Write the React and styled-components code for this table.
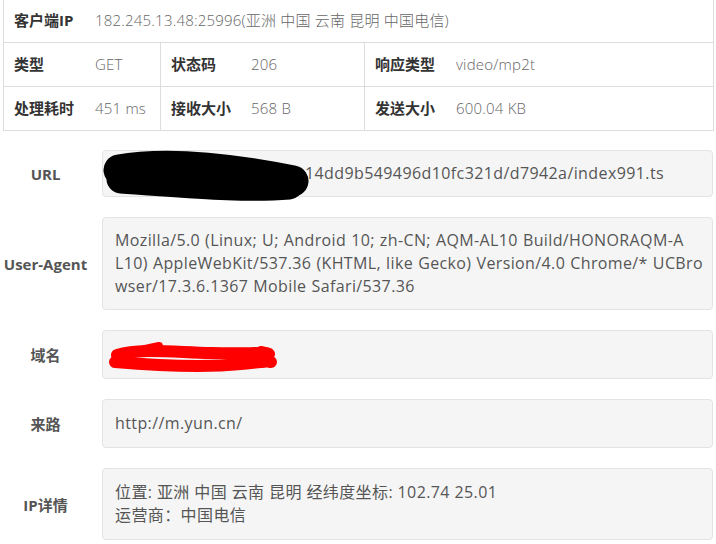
import React from 'react'
import styled, { createGlobalStyle } from 'styled-components'

const GlobalStyle = createGlobalStyle`
    body {
        margin: 0;
        background: #fff;
        font-family: "Open Sans", "Noto Sans CJK SC", sans-serif;
        color: #333;
    }
`

const Page = styled.div`
    width: 716px;
    padding: 0 3px;
    box-sizing: border-box;
`

const InfoTable = styled.table`
    width: 710px;
    margin-top: -2px;
    border-collapse: collapse;
    table-layout: fixed;
    font-size: 15px;
`

const Cell = styled.td`
    border: 1px solid #ddd;
    padding: 11px 10px;
    line-height: 21px;
    white-space: nowrap;
`

const Label = styled.span`
    display: inline-block;
    width: ${p => p.w || 80}px;
    font-weight: 700;
    color: #333;
`

const Value = styled.span`
    color: #666;
    font-weight: 300;
    letter-spacing: 0.2px;
`

const Details = styled.div`
    margin-top: 19px;
    display: flex;
    flex-direction: column;
    gap: 20px;
`

const Row = styled.div`
    display: grid;
    grid-template-columns: 85px minmax(0, 1fr);
    column-gap: 14px;
    align-items: center;
`

const RowLabel = styled.div`
    text-align: center;
    font-size: 15px;
    font-weight: 700;
    color: #555;
`

const Well = styled.div`
    position: relative;
    background: #f5f5f5;
    border: 1px solid #e3e3e3;
    border-radius: 4px;
    padding: ${p => p.tight ? '11px' : '12px'} 12px;
    font-size: 16px;
    line-height: 23px;
    letter-spacing: ${p => p.wide ? '0.38px' : '0.4px'};
    word-spacing: ${p => p.wide ? '0.5px' : '0'};
    white-space: nowrap;
    color: #555;
    min-height: 23px;
`

const Scribble = styled.svg`
    position: absolute;
    left: ${p => p.x}px;
    top: ${p => p.y}px;
    overflow: visible;
    pointer-events: none;
`

const HiddenPart = styled.span`
    display: inline-block;
    width: ${p => p.w}px;
`

const App = () => {
    return (
        <>
            <GlobalStyle />
            <Page>
                <InfoTable>
                    <colgroup>
                        <col style={{ width: 157 }} />
                        <col style={{ width: 204 }} />
                        <col style={{ width: 349 }} />
                    </colgroup>
                    <tbody>
                        <tr>
                            <Cell colSpan={3}>
                                <Label w={81}>客户端IP</Label>
                                <Value>182.245.13.48:25996(亚洲 中国 云南 昆明 中国电信)</Value>
                            </Cell>
                        </tr>
                        <tr>
                            <Cell><Label w={81}>类型</Label><Value>GET</Value></Cell>
                            <Cell><Label>状态码</Label><Value>206</Value></Cell>
                            <Cell><Label w={81}>响应类型</Label><Value>video/mp2t</Value></Cell>
                        </tr>
                        <tr>
                            <Cell><Label w={81}>处理耗时</Label><Value>451 ms</Value></Cell>
                            <Cell><Label>接收大小</Label><Value>568 B</Value></Cell>
                            <Cell><Label w={81}>发送大小</Label><Value>600.04 KB</Value></Cell>
                        </tr>
                    </tbody>
                </InfoTable>

                <Details>
                    <Row>
                        <RowLabel>URL</RowLabel>
                        <Well tight>
                            <HiddenPart w={190} />14dd9b549496d10fc321d/d7942a/index991.ts
                            <Scribble x={0} y={2} width="210" height="46">
                                <path d="M16 17 C 60 9, 120 14, 190 28" stroke="#000" strokeWidth="31" strokeLinecap="round" fill="none" />
                                <path d="M18 26 C 80 30, 140 36, 186 32" stroke="#000" strokeWidth="29" strokeLinecap="round" fill="none" />
                            </Scribble>
                        </Well>
                    </Row>
                    <Row>
                        <RowLabel>User-Agent</RowLabel>
                        <Well wide tight>
                            Mozilla/5.0 (Linux; U; Android 10; zh-CN; AQM-AL10 Build/HONORAQM-A<br />
                            L10) AppleWebKit/537.36 (KHTML, like Gecko) Version/4.0 Chrome/* UCBro<br />
                            wser/17.3.6.1367 Mobile Safari/537.36
                        </Well>
                    </Row>
                    <Row>
                        <RowLabel>域名</RowLabel>
                        <Well>
                            &nbsp;
                            <Scribble x={8} y={13} width="164" height="26">
                                <path d="M6 11 C 30 4, 60 8, 100 9 S 150 8, 158 10" stroke="#f00" strokeWidth="12" strokeLinecap="round" fill="none" />
                                <path d="M4 18 C 40 21, 90 24, 130 20 S 155 18, 160 18" stroke="#f00" strokeWidth="12" strokeLinecap="round" fill="none" />
                                <path d="M34 5 L 48 2" stroke="#f00" strokeWidth="8" strokeLinecap="round" fill="none" />
                                <path d="M150 6 L 158 8" stroke="#f00" strokeWidth="8" strokeLinecap="round" fill="none" />
                            </Scribble>
                        </Well>
                    </Row>
                    <Row>
                        <RowLabel>来路</RowLabel>
                        <Well>http://m.yun.cn/</Well>
                    </Row>
                    <Row>
                        <RowLabel>IP详情</RowLabel>
                        <Well>
                            位置: 亚洲 中国 云南 昆明 经纬度坐标: 102.74 25.01<br />
                            运营商：中国电信
                        </Well>
                    </Row>
                </Details>
            </Page>
        </>
    )
}

export default App
